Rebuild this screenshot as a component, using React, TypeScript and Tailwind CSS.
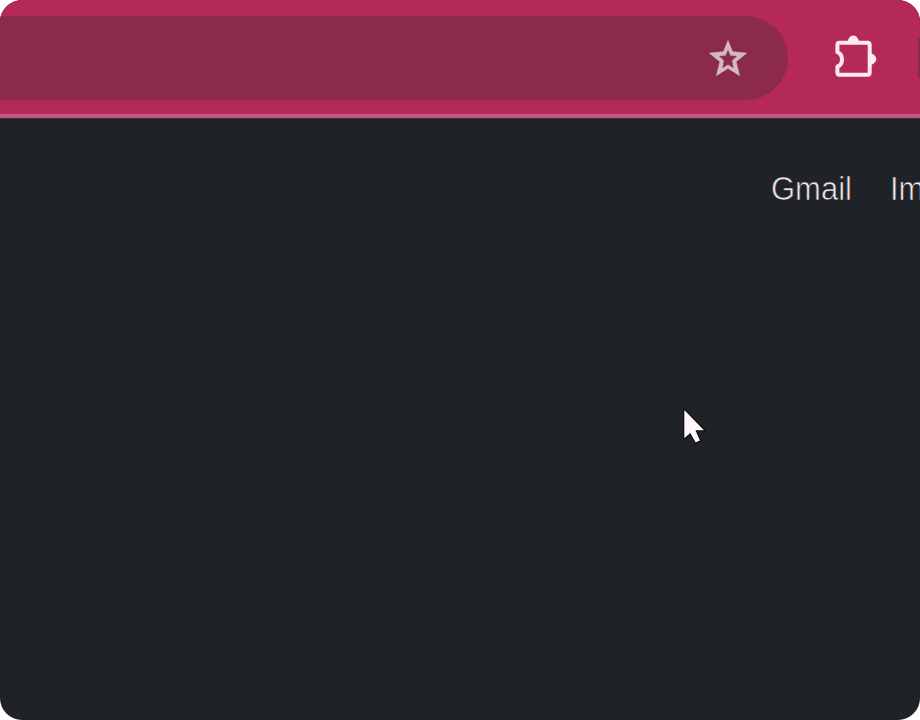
function StarIcon() {
  return (
    <svg width="44" height="44" viewBox="706 36.4 44 44" fill="none" aria-label="Bookmark">
      <path
        d="M728 40.5L732.6 51.9L747 53.3L736.3 62.2L739.8 76.4L728 69L716.2 76.4L719.7 62.2L709 53.3L723.4 51.9ZM728 50L725.5 55.9L718.8 56.5L723.8 61L722.4 68.6L728 65.2L733.6 68.6L732.2 61L737.2 56.5L730.5 55.9Z"
        fill="#d5b9c2"
        stroke="#d5b9c2"
        strokeWidth="0.2"
        fillRule="evenodd"
      />
    </svg>
  );
}

function ExtensionIcon() {
  return (
    <svg width="44" height="46" viewBox="834 34 44 46" fill="none" aria-label="Extensions">
      <path
        d="M839.5 42.7H867.5Q869.7 42.7 869.7 45V72.6Q869.7 74.8 867.5 74.8H839.5Q837.4 74.8 837.4 72.6V66.5C843.5 64.5 843.5 54.5 837.4 52.2V45Q837.4 42.7 839.5 42.7Z"
        stroke="#fbeaf0"
        strokeWidth="4"
        strokeLinejoin="round"
      />
      <path d="M847.5 42C848 39 850 35.5 853.4 35.5S858.6 39 859.2 42ZM870.5 53C873.5 54 876.3 56 876.3 59S873.5 64.2 870.5 65.2Z" fill="#fbeaf0" />
    </svg>
  );
}

function Cursor() {
  return (
    <svg className="absolute left-[680px] top-[404px]" width="30" height="44" viewBox="680 404 30 44">
      <path
        d="M684.3 410V438.3L690.3 433L695.6 442.6L700 440.6L695.4 430.2H704Z"
        fill="#fff7fa"
        stroke="#08090c"
        strokeWidth="2"
        paintOrder="stroke"
      />
    </svg>
  );
}

export default function App() {
  return (
    <div className="h-[720px] w-[920px] overflow-hidden bg-white">
      <div className="relative flex h-full w-full flex-col overflow-hidden rounded-[22px] bg-[#1f2226]">
        <header className="flex h-[118px] shrink-0 items-start border-b-4 border-[#bd5c84] bg-[#b42957] pt-4">
          <div className="flex h-[84px] w-[788px] shrink-0 items-center justify-end rounded-r-full bg-[#8b2a49] pr-[38px]">
            <StarIcon />
          </div>
          <div className="ml-[46px] mt-[18px] shrink-0">
            <ExtensionIcon />
          </div>
          <div className="ml-10 mt-[22px] h-10 w-0.5 shrink-0 bg-[#8b2a49]" />
        </header>
        <main className="flex-1 overflow-hidden border-t border-[#4c2338]">
          <nav className="flex origin-top-left scale-y-108 gap-[38px] whitespace-nowrap pl-[771px] pt-[45px] font-['Liberation_Sans',Arial,sans-serif] text-[31px] leading-10 text-[#eee5ea] [-webkit-text-stroke:0.6px_#1f2226]">
            <span className="shrink-0">Gmail</span>
            <span className="shrink-0">Im</span>
          </nav>
        </main>
        <Cursor />
      </div>
    </div>
  );
}
